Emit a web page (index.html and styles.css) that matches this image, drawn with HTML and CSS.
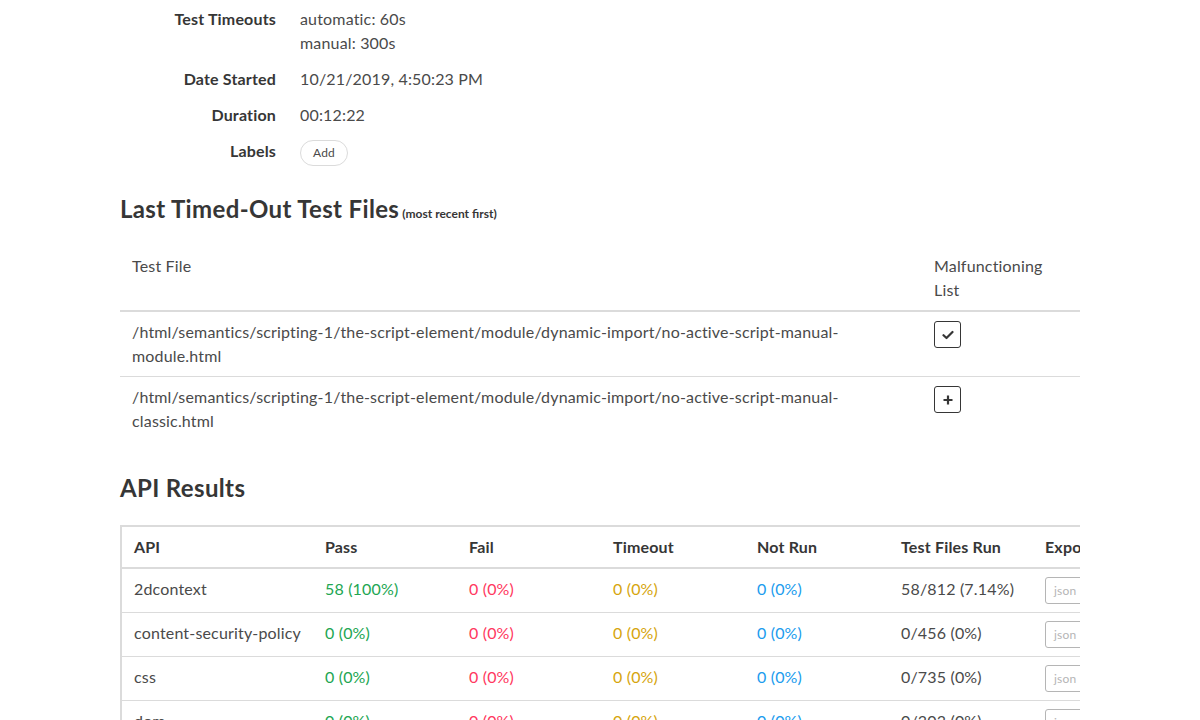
FILE: index.html
```html
<!DOCTYPE html>
<html>
<head>
<meta charset="utf-8">
<link rel="stylesheet" href="styles.css">
</head>
<body>
<main class="container">
  <section class="details">
    <div class="detail-row">
      <div class="detail-label">Test Timeouts</div>
      <div class="detail-value">automatic: 60s<br>manual: 300s</div>
    </div>
    <div class="detail-row">
      <div class="detail-label">Date Started</div>
      <div class="detail-value">10/21/2019, 4:50:23 PM</div>
    </div>
    <div class="detail-row">
      <div class="detail-label">Duration</div>
      <div class="detail-value">00:12:22</div>
    </div>
    <div class="detail-row">
      <div class="detail-label">Labels</div>
      <div class="detail-value"><button class="pill-btn">Add</button></div>
    </div>
  </section>

  <h2 class="section-title">Last Timed-Out Test Files<small class="title-note">(most recent first)</small></h2>
  <table class="files-table">
    <thead>
      <tr>
        <th class="col-file">Test File</th>
        <th class="col-mal">Malfunctioning List</th>
      </tr>
    </thead>
    <tbody>
      <tr>
        <td>/html/semantics/scripting-1/the-script-element/module/dynamic-import/no-active-script-manual-module.html</td>
        <td><button class="icon-btn" aria-label="remove"><svg width="12" height="10" viewBox="0 0 12 10"><path d="M1.5 5.2 L4.5 8 L10.5 2" fill="none" stroke="#363636" stroke-width="2.2" stroke-linecap="round" stroke-linejoin="round"/></svg></button></td>
      </tr>
      <tr>
        <td>/html/semantics/scripting-1/the-script-element/module/dynamic-import/no-active-script-manual-classic.html</td>
        <td><button class="icon-btn" aria-label="add"><svg width="12" height="12" viewBox="0 0 12 12"><path d="M6 1.5 V10.5 M1.5 6 H10.5" fill="none" stroke="#363636" stroke-width="2.2"/></svg></button></td>
      </tr>
    </tbody>
  </table>

  <h2 class="section-title api-title">API Results</h2>
  <div class="api-wrap">
    <table class="api-table">
      <thead>
        <tr>
          <th class="c-api">API</th>
          <th class="c-num">Pass</th>
          <th class="c-num">Fail</th>
          <th class="c-num">Timeout</th>
          <th class="c-num">Not Run</th>
          <th class="c-num">Test Files Run</th>
          <th class="c-exp">Export</th>
        </tr>
      </thead>
      <tbody>
        <tr>
          <td>2dcontext</td>
          <td class="pass">58 (100%)</td>
          <td class="fail">0 (0%)</td>
          <td class="timeout">0 (0%)</td>
          <td class="notrun">0 (0%)</td>
          <td>58/812 (7.14%)</td>
          <td><div class="select">json</div></td>
        </tr>
        <tr>
          <td>content-security-policy</td>
          <td class="pass">0 (0%)</td>
          <td class="fail">0 (0%)</td>
          <td class="timeout">0 (0%)</td>
          <td class="notrun">0 (0%)</td>
          <td>0/456 (0%)</td>
          <td><div class="select">json</div></td>
        </tr>
        <tr>
          <td>css</td>
          <td class="pass">0 (0%)</td>
          <td class="fail">0 (0%)</td>
          <td class="timeout">0 (0%)</td>
          <td class="notrun">0 (0%)</td>
          <td>0/735 (0%)</td>
          <td><div class="select">json</div></td>
        </tr>
        <tr>
          <td>dom</td>
          <td class="pass">0 (0%)</td>
          <td class="fail">0 (0%)</td>
          <td class="timeout">0 (0%)</td>
          <td class="notrun">0 (0%)</td>
          <td>0/303 (0%)</td>
          <td><div class="select">json</div></td>
        </tr>
      </tbody>
    </table>
  </div>
</main>
</body>
</html>
```
FILE: styles.css
```css
html, body {
  margin: 0;
  padding: 0;
  background: #fff;
}
body {
  font-family: "Lato", "Noto Sans", sans-serif;
  font-size: 16px;
  line-height: 24px;
  letter-spacing: 0.17px;
  color: #4a4a4a;
  overflow: hidden;
}
.container {
  width: 960px;
  margin: 0 auto;
  padding-top: 7px;
}
.details {
  display: flex;
  flex-direction: column;
  gap: 12px;
}
.detail-row {
  display: flex;
  gap: 24px;
}
.detail-label {
  width: 156px;
  text-align: right;
  font-weight: 700;
  color: #363636;
}
.detail-value {
  color: #4a4a4a;
}
.pill-btn {
  font-family: inherit;
  font-size: 12px;
  letter-spacing: 0.2px;
  color: #4a4a4a;
  background: #fff;
  border: 1px solid #dbdbdb;
  border-radius: 290px;
  height: 26px;
  padding: 0 12px;
  line-height: 24px;
  margin-top: 1px;
  display: block;
}
.section-title {
  margin: 0;
  font-size: 24px;
  line-height: 30px;
  font-weight: 700;
  letter-spacing: 0.35px;
  color: #363636;
  padding-top: 28px;
}
.title-note {
  font-size: 12px;
  font-weight: 700;
  letter-spacing: 0;
  margin-left: 3px;
}
.files-table {
  width: 960px;
  border-collapse: collapse;
  margin-top: 17px;
  table-layout: fixed;
}
.files-table th,
.files-table td {
  text-align: left;
  vertical-align: top;
  padding: 8px 12px;
  font-weight: 400;
  color: #4a4a4a;
}
.files-table th {
  border-bottom: 2px solid #dbdbdb;
}
.files-table tbody tr:first-child td {
  border-bottom: 1px solid #dbdbdb;
}
.col-mal {
  width: 134px;
}
.icon-btn {
  width: 27px;
  height: 27px;
  border: 1px solid #363636;
  border-radius: 3px;
  background: #fff;
  display: flex;
  align-items: center;
  justify-content: center;
  padding: 0;
  margin-top: 1px;
}
.api-title {
  padding-top: 32px;
}
.api-wrap {
  margin-top: 22px;
  width: 960px;
  overflow: hidden;
}
.api-table {
  border-collapse: collapse;
  border: 2px solid #dbdbdb;
  table-layout: fixed;
  width: 1060px;
}
.api-table th,
.api-table td {
  text-align: left;
  vertical-align: top;
  padding: 8px 12px;
  color: #4a4a4a;
}
.api-table th {
  font-weight: 700;
  color: #363636;
  border-bottom: 2px solid #dbdbdb;
}
.api-table td {
  border-bottom: 1px solid #dbdbdb;
  white-space: nowrap;
}
.c-api { width: 167px; }
.c-num { width: 120px; }
.c-exp { width: 127px; }
.pass { color: #22a652 !important; }
.fail { color: #ff3860 !important; }
.timeout { color: #d6a50d !important; }
.notrun { color: #209cee !important; }
.select {
  width: 80px;
  height: 25px;
  border: 1px solid #b5b5b5;
  border-radius: 3px;
  font-size: 12px;
  color: #b5b5b5;
  line-height: 25px;
  padding-left: 8px;
  box-sizing: content-box;
}
```
